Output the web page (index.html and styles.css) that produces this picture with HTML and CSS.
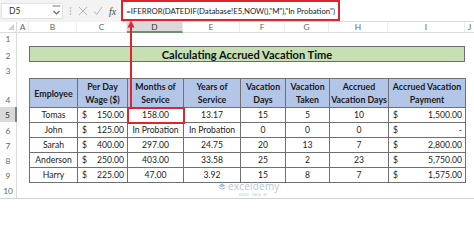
FILE: index.html
```html
<!DOCTYPE html>
<html lang="en">
<head>
<meta charset="utf-8">
<title>Calculating Accrued Vacation Time</title>
<link rel="stylesheet" href="styles.css">
</head>
<body>
<div class="app">
  <div class="fbar">
    <div class="namebox">
      <span class="nb-text">D5</span>
      <svg class="nb-chev" width="9" height="12" viewBox="0 0 9 12"><path d="M0.5 1h8" stroke="#777" stroke-width="1"/><path d="M1.5 6l3 3 3-3" fill="none" stroke="#666" stroke-width="1.1"/></svg>
    </div>
    <svg class="fb-dots" width="3" height="10" viewBox="0 0 3 10"><circle cx="1.5" cy="2" r="0.8" fill="#aaa"/><circle cx="1.5" cy="5" r="0.8" fill="#aaa"/><circle cx="1.5" cy="8" r="0.8" fill="#aaa"/></svg>
    <svg class="fb-icon" width="10" height="10" viewBox="0 0 10 10"><path d="M1 1l8 8M9 1l-8 8" stroke="#b5b5b5" stroke-width="1"/></svg>
    <svg class="fb-icon" width="10" height="10" viewBox="0 0 10 10"><path d="M1 5.5l2.8 3L9 1" fill="none" stroke="#b5b5b5" stroke-width="1"/></svg>
    <span class="fx">fx</span>
    <div class="formula">
      <div class="formula-box">=IFERROR(DATEDIF(Database!E5,NOW(),"M"),"In Probation")</div>
    </div>
  </div>

  <div class="sheet">
    <div class="corner"><span class="corner-tri"></span></div>
    <div class="colh">A</div>
    <div class="colh">B</div>
    <div class="colh">C</div>
    <div class="colh colh-sel">D</div>
    <div class="colh">E</div>
    <div class="colh">F</div>
    <div class="colh">G</div>
    <div class="colh">H</div>
    <div class="colh">I</div>
    <div class="colh colh-last">J</div>

    <div class="rowh r1">1</div>
    <div class="rowh r2">2</div>
    <div class="rowh r3">3</div>
    <div class="rowh r4">4</div>
    <div class="rowh r5 rowh-sel">5</div>
    <div class="rowh r6">6</div>
    <div class="rowh r7">7</div>
    <div class="rowh r8">8</div>
    <div class="rowh r9">9</div>
    <div class="rowh r10">10</div>

    <div class="title">Calculating Accrued Vacation Time</div>

    <table class="data">
      <colgroup>
        <col class="c-emp"><col class="c-wage"><col class="c-mon"><col class="c-yrs">
        <col class="c-vd"><col class="c-vt"><col class="c-avd"><col class="c-avp">
      </colgroup>
      <thead>
        <tr>
          <th>Employee</th>
          <th>Per Day<br>Wage ($)</th>
          <th>Months of<br>Service</th>
          <th>Years of<br>Service</th>
          <th>Vacation<br>Days</th>
          <th>Vacation<br>Taken</th>
          <th>Accrued<br>Vacation Days</th>
          <th>Accrued Vacation<br>Payment</th>
        </tr>
      </thead>
      <tbody>
        <tr>
          <td>Tomas</td>
          <td class="acc"><span>$</span><span>150.00</span></td>
          <td class="sel">158.00</td>
          <td>13.17</td><td>15</td><td>5</td><td>10</td>
          <td class="acc"><span>$</span><span>1,500.00</span></td>
        </tr>
        <tr>
          <td>John</td>
          <td class="acc"><span>$</span><span>125.00</span></td>
          <td>In Probation</td>
          <td>In Probation</td><td>0</td><td>0</td><td>0</td>
          <td class="acc"><span>$</span><span class="dash">-</span></td>
        </tr>
        <tr>
          <td>Sarah</td>
          <td class="acc"><span>$</span><span>400.00</span></td>
          <td>297.00</td>
          <td>24.75</td><td>20</td><td>13</td><td>7</td>
          <td class="acc"><span>$</span><span>2,800.00</span></td>
        </tr>
        <tr>
          <td>Anderson</td>
          <td class="acc"><span>$</span><span>250.00</span></td>
          <td>403.00</td>
          <td>33.58</td><td>25</td><td>2</td><td>23</td>
          <td class="acc"><span>$</span><span>5,750.00</span></td>
        </tr>
        <tr>
          <td>Harry</td>
          <td class="acc"><span>$</span><span>225.00</span></td>
          <td>47.00</td>
          <td>3.92</td><td>15</td><td>8</td><td>7</td>
          <td class="acc"><span>$</span><span>1,575.00</span></td>
        </tr>
      </tbody>
    </table>

    <div class="watermark">
      <div class="wm-row">
        <svg class="wm-logo" width="8" height="8" viewBox="0 0 8 8"><path d="M4 0.5l3.5 2-3.5 2-3.5-2z" fill="#9fb3d6"/><path d="M0.5 4.3l3.5 2 3.5-2" fill="none" stroke="#9fb3d6" stroke-width="1"/></svg>
        <span class="wm-name">exceldemy</span>
      </div>
      <span class="wm-sub">EXCEL · DATA · BI</span>
    </div>
  </div>

  <svg class="arrow" width="10" height="90" viewBox="0 0 10 90">
    <path d="M5 5V88" stroke="#e0242d" stroke-width="2"/>
    <path d="M1.5 7.5L5 0.5 8.5 7.5z" fill="#e0242d"/>
  </svg>
</div>
</body>
</html>
```

FILE: styles.css
```css
* { box-sizing: border-box; margin: 0; padding: 0; }

html, body {
  width: 474px;
  height: 200px;
  overflow: hidden;
  background: #ffffff;
}

body {
  font-family: Lato, "Liberation Sans", sans-serif;
  color: #222222;
}

.app {
  position: relative;
  width: 474px;
  height: 200px;
}

/* ---------- formula bar ---------- */
.fbar {
  display: flex;
  align-items: center;
  height: 22px;
  background: #f3f3f3;
}

.namebox {
  display: flex;
  align-items: center;
  justify-content: space-between;
  width: 62px;
  height: 16px;
  margin-left: 1px;
  padding: 0 1px 0 7px;
  background: #ffffff;
  border: 1px solid #e2e2e2;
  font-size: 8.5px;
  color: #333333;
}

.fb-dots { margin-left: 6px; }

.fb-icon { margin-left: 6px; }

.fb-icon + .fb-icon { margin-left: 5px; }

.fx {
  margin-left: 6px;
  font-family: "Liberation Serif", serif;
  font-style: italic;
  font-size: 10px;
  color: #444444;
}

.formula {
  flex: 1;
  align-self: stretch;
  display: flex;
  margin-left: 5px;
  background: #ffffff;
  border-bottom: 1px solid #dadada;
}

.formula-box {
  display: flex;
  align-items: center;
  width: 219px;
  padding-left: 3px;
  border: 2px solid #dd2530;
  font-size: 7.8px;
  color: #222222;
  white-space: nowrap;
  overflow: hidden;
}

/* ---------- sheet grid ---------- */
.sheet {
  position: relative;
  display: grid;
  grid-template-columns: 17px 12px 48px 50px 56px 57px 45px 44px 59px 77px 1fr;
  grid-template-rows: 11px 13px 17px 15px 29px 15px 16px 15px 15px 15px 15px 1fr;
  height: 177px;
  border-bottom: 1px solid #d0d0d0;
}

.corner {
  position: relative;
  grid-column: 1;
  grid-row: 1;
  background: #ffffff;
  border-right: 1px solid #dcdcdc;
  border-bottom: 1px solid #dcdcdc;
}

.corner-tri {
  position: absolute;
  right: 2px;
  bottom: 2px;
  width: 0;
  height: 0;
  border-left: 6px solid transparent;
  border-bottom: 6px solid #cfcfcf;
}

.colh {
  grid-row: 1;
  display: flex;
  align-items: center;
  justify-content: center;
  font-size: 8.4px;
  color: #666666;
  background: #ffffff;
  border-right: 1px solid #ececec;
  border-bottom: 1px solid #dcdcdc;
}

.colh-sel {
  background: #d9d9d9;
  color: #333333;
  border-bottom: 2px solid #6f8f72;
}

.colh-last { border-right: none; }

.rowh {
  grid-column: 1;
  display: flex;
  align-items: flex-end;
  justify-content: center;
  padding-bottom: 2px;
  font-size: 8.4px;
  color: #666666;
  background: #ffffff;
  border-right: 1px solid #dcdcdc;
}

.rowh-sel {
  background: #d9d9d9;
  color: #333333;
  border-right: 2px solid #6f8f72;
}

.r1 { grid-row: 2; }
.r2 { grid-row: 3; }
.r3 { grid-row: 4; }
.r4 { grid-row: 5; }
.r5 { grid-row: 6; }
.r6 { grid-row: 7; }
.r7 { grid-row: 8; }
.r8 { grid-row: 9; }
.r9 { grid-row: 10; }
.r10 { grid-row: 11; }

.title {
  grid-column: 3 / 11;
  grid-row: 3;
  display: flex;
  align-items: center;
  justify-content: center;
  margin-bottom: 1px;
  background: #c6e0b4;
  border: 1px solid #6d6d6d;
  font-weight: 700;
  font-size: 11.1px;
  color: #111111;
}

/* ---------- data table ---------- */
.data {
  grid-column: 3 / 11;
  grid-row: 5 / 11;
  width: 436px;
  height: 105px;
  border-collapse: collapse;
  table-layout: fixed;
  font-size: 8.6px;
  color: #222222;
}

.c-emp { width: 48px; }
.c-wage { width: 50px; }
.c-mon { width: 56px; }
.c-yrs { width: 57px; }
.c-vd { width: 45px; }
.c-vt { width: 44px; }
.c-avd { width: 59px; }
.c-avp { width: 77px; }

.data th,
.data td {
  border: 1px solid #707070;
  text-align: center;
  vertical-align: middle;
  white-space: nowrap;
  overflow: visible;
}

.data th {
  height: 29px;
  background: #b4c6e7;
  font-weight: 700;
  font-size: 8.8px;
  line-height: 13px;
  color: #1a1a1a;
}

.data td {
  height: 15px;
  line-height: 10px;
}

.data td.acc span:first-child {
  float: left;
  padding-left: 4px;
}

.data td.acc span:last-child {
  float: right;
  padding-right: 3px;
}

.data td.acc .dash { padding-right: 12px; }

.data td.sel {
  outline: 2px solid #dd2530;
  outline-offset: -1px;
}

/* ---------- watermark ---------- */
.watermark {
  position: absolute;
  left: 218px;
  top: 159px;
  display: flex;
  flex-direction: column;
  align-items: center;
  gap: 1px;
  opacity: 0.85;
}

.wm-row {
  display: flex;
  align-items: center;
  gap: 2px;
  height: 11px;
}

.wm-name {
  font-family: "Open Sans", sans-serif;
  font-size: 10px;
  line-height: 11px;
  color: #aebbd4;
  letter-spacing: 0.2px;
}

.wm-sub {
  font-size: 3.5px;
  line-height: 4px;
  color: #b8c2d4;
  margin-left: 8px;
}

/* ---------- arrow overlay ---------- */
.arrow {
  position: absolute;
  left: 126px;
  top: 20px;
}
```
